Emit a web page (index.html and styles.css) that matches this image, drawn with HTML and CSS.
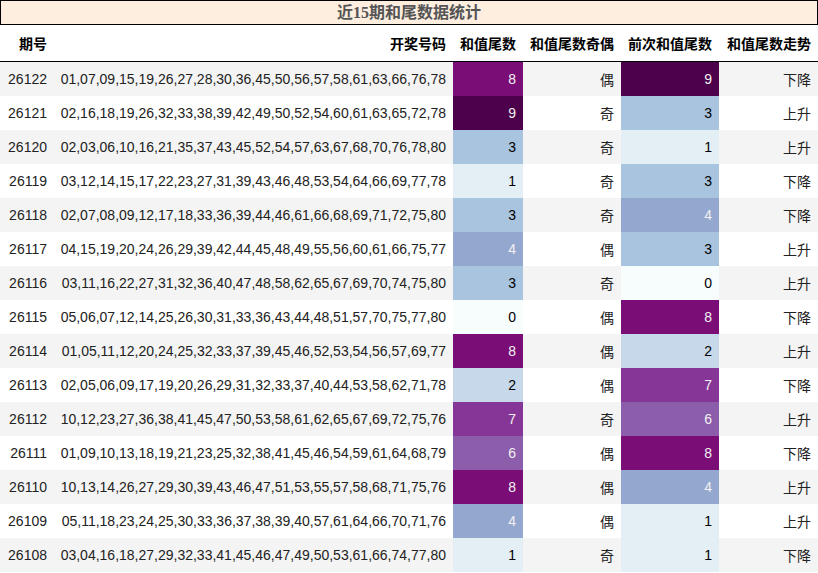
FILE: index.html
```html
<!DOCTYPE html>
<html lang="zh">
<head>
<meta charset="utf-8">
<link rel="stylesheet" href="styles.css">
</head>
<body>
<div class="title">近15期和尾数据统计</div>
<table class="stats">
<colgroup>
<col class="c-issue"><col class="c-nums"><col class="c-tail"><col class="c-parity"><col class="c-prev"><col class="c-trend">
</colgroup>
<thead>
<tr><th>期号</th><th>开奖号码</th><th>和值尾数</th><th>和值尾数奇偶</th><th>前次和值尾数</th><th>和值尾数走势</th></tr>
</thead>
<tbody>
<tr><td>26122</td><td>01,07,09,15,19,26,27,28,30,36,45,50,56,57,58,61,63,66,76,78</td><td class="v8">8</td><td>偶</td><td class="v9">9</td><td>下降</td></tr>
<tr><td>26121</td><td>02,16,18,19,26,32,33,38,39,42,49,50,52,54,60,61,63,65,72,78</td><td class="v9">9</td><td>奇</td><td class="v3">3</td><td>上升</td></tr>
<tr><td>26120</td><td>02,03,06,10,16,21,35,37,43,45,52,54,57,63,67,68,70,76,78,80</td><td class="v3">3</td><td>奇</td><td class="v1">1</td><td>上升</td></tr>
<tr><td>26119</td><td>03,12,14,15,17,22,23,27,31,39,43,46,48,53,54,64,66,69,77,78</td><td class="v1">1</td><td>奇</td><td class="v3">3</td><td>下降</td></tr>
<tr><td>26118</td><td>02,07,08,09,12,17,18,33,36,39,44,46,61,66,68,69,71,72,75,80</td><td class="v3">3</td><td>奇</td><td class="v4">4</td><td>下降</td></tr>
<tr><td>26117</td><td>04,15,19,20,24,26,29,39,42,44,45,48,49,55,56,60,61,66,75,77</td><td class="v4">4</td><td>偶</td><td class="v3">3</td><td>上升</td></tr>
<tr><td>26116</td><td>03,11,16,22,27,31,32,36,40,47,48,58,62,65,67,69,70,74,75,80</td><td class="v3">3</td><td>奇</td><td class="v0">0</td><td>上升</td></tr>
<tr><td>26115</td><td>05,06,07,12,14,25,26,30,31,33,36,43,44,48,51,57,70,75,77,80</td><td class="v0">0</td><td>偶</td><td class="v8">8</td><td>下降</td></tr>
<tr><td>26114</td><td>01,05,11,12,20,24,25,32,33,37,39,45,46,52,53,54,56,57,69,77</td><td class="v8">8</td><td>偶</td><td class="v2">2</td><td>上升</td></tr>
<tr><td>26113</td><td>02,05,06,09,17,19,20,26,29,31,32,33,37,40,44,53,58,62,71,78</td><td class="v2">2</td><td>偶</td><td class="v7">7</td><td>下降</td></tr>
<tr><td>26112</td><td>10,12,23,27,36,38,41,45,47,50,53,58,61,62,65,67,69,72,75,76</td><td class="v7">7</td><td>奇</td><td class="v6">6</td><td>上升</td></tr>
<tr><td>26111</td><td>01,09,10,13,18,19,21,23,25,32,38,41,45,46,54,59,61,64,68,79</td><td class="v6">6</td><td>偶</td><td class="v8">8</td><td>下降</td></tr>
<tr><td>26110</td><td>10,13,14,26,27,29,30,39,43,46,47,51,53,55,57,58,68,71,75,76</td><td class="v8">8</td><td>偶</td><td class="v4">4</td><td>上升</td></tr>
<tr><td>26109</td><td>05,11,18,23,24,25,30,33,36,37,38,39,40,57,61,64,66,70,71,76</td><td class="v4">4</td><td>偶</td><td class="v1">1</td><td>上升</td></tr>
<tr><td>26108</td><td>03,04,16,18,27,29,32,33,41,45,46,47,49,50,53,61,66,74,77,80</td><td class="v1">1</td><td>奇</td><td class="v1">1</td><td>下降</td></tr>
</tbody>
</table>
</body>
</html>
```
FILE: styles.css
```css
html, body {
  margin: 0;
  padding: 0;
  background: #ffffff;
}
body {
  width: 818px;
  font-family: "Liberation Sans", "Noto Sans CJK SC", sans-serif;
  font-size: 14px;
  color: #222;
}
.title {
  box-sizing: border-box;
  height: 25px;
  border: 1px solid #000;
  background: #fdeee0;
  text-align: center;
  font-family: "Liberation Serif", "Noto Sans CJK SC", serif;
  font-weight: bold;
  font-size: 16px;
  line-height: 23px;
  color: #555;
}
.stats {
  width: 818px;
  border-collapse: collapse;
  table-layout: fixed;
}
.c-issue { width: 54px; }
.c-nums { width: 399px; }
.c-tail { width: 70px; }
.c-parity { width: 98px; }
.c-prev { width: 98px; }
.c-trend { width: 99px; }
.stats th {
  height: 36px;
  padding: 0 7px 0 0;
  text-align: right;
  font-weight: bold;
  color: #000;
  border-bottom: 1px solid #000;
  white-space: nowrap;
}
.stats td {
  height: 34px;
  padding: 0 7px 0 0;
  text-align: right;
  white-space: nowrap;
}
.stats tbody tr:nth-child(odd) { background: #f4f4f4; }
.stats tbody tr:nth-child(even) { background: #ffffff; }
.stats td.v0 { background: #f7fcfd; color: #000; }
.stats td.v1 { background: #e3eef5; color: #000; }
.stats td.v2 { background: #c6d8e9; color: #000; }
.stats td.v3 { background: #a9c4de; color: #000; }
.stats td.v4 { background: #94a7cf; color: #f1f1f1; }
.stats td.v6 { background: #8b5daa; color: #f1f1f1; }
.stats td.v7 { background: #863696; color: #f1f1f1; }
.stats td.v8 { background: #7b0d77; color: #f1f1f1; }
.stats td.v9 { background: #4d004b; color: #f1f1f1; }
```
